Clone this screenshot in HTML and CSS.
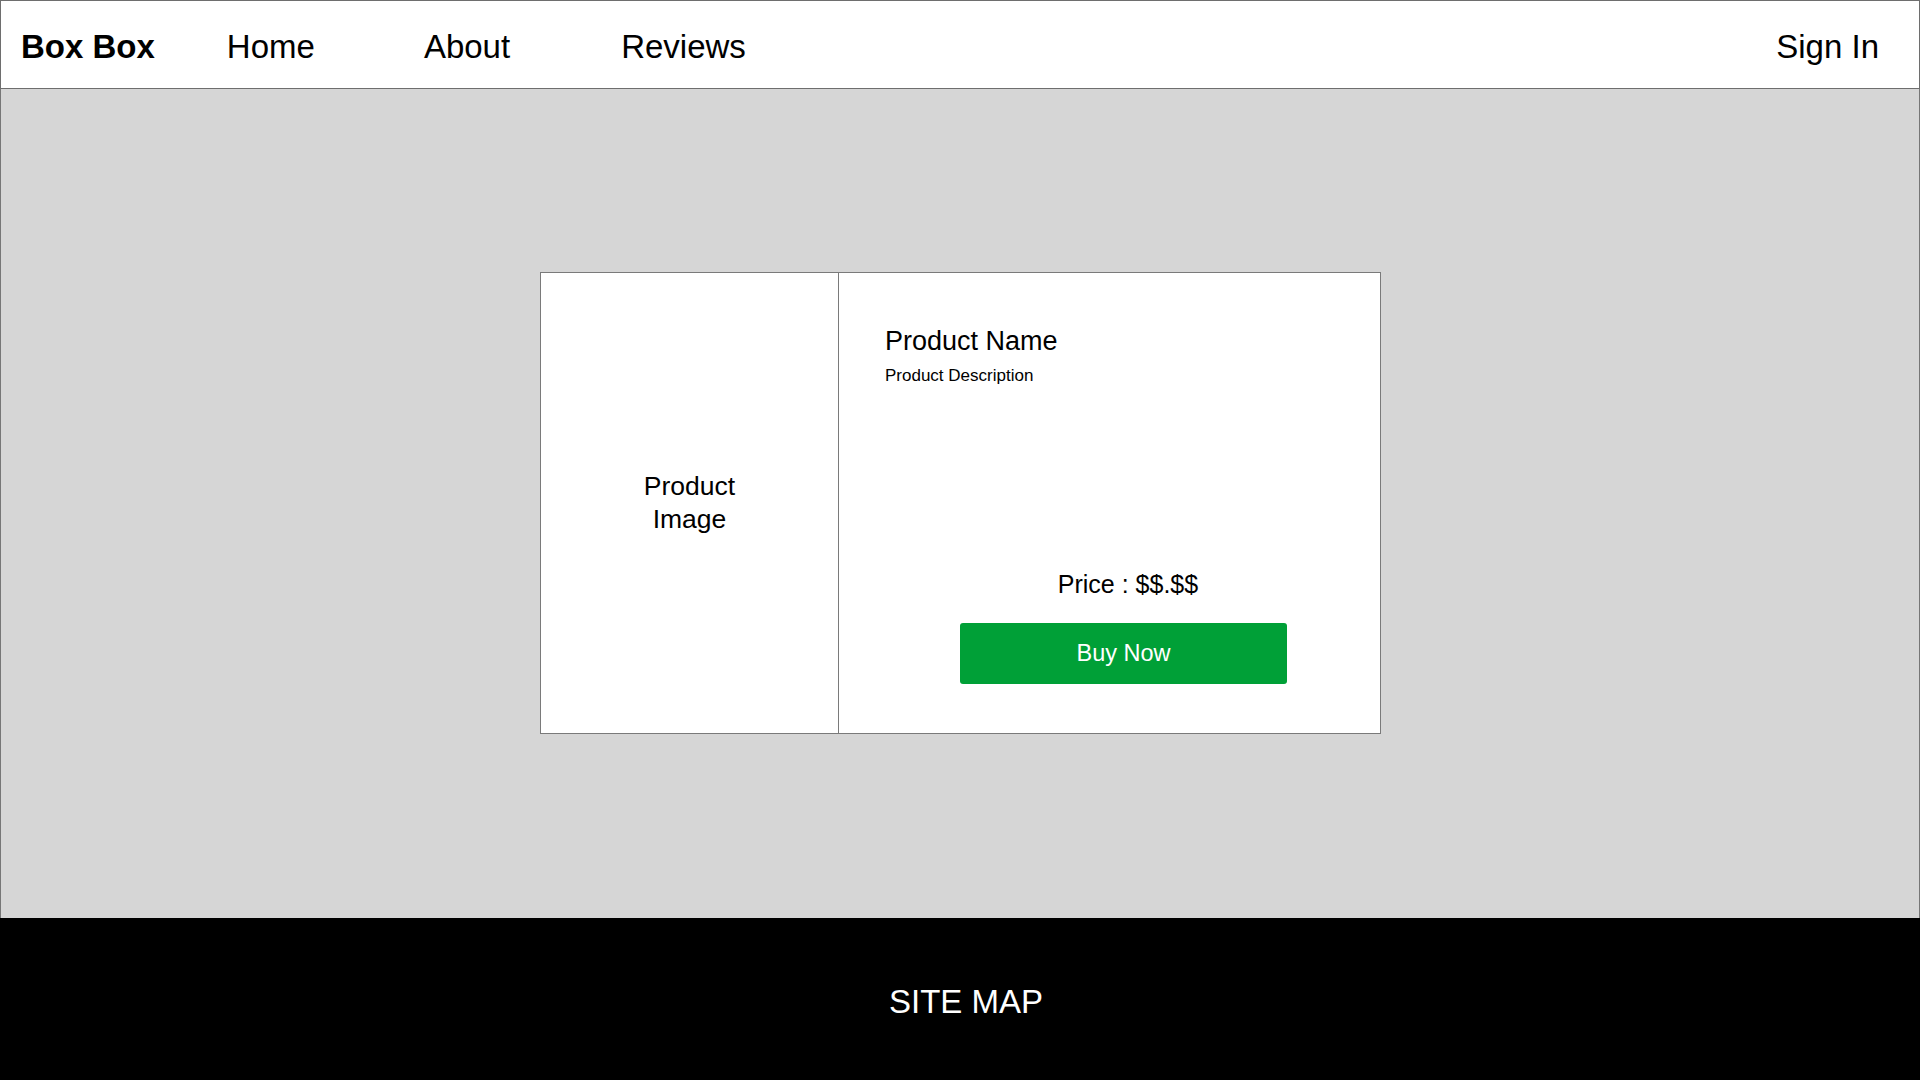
FILE: index.html
```html
<!DOCTYPE html>
<html lang="en">
<head>
<meta charset="utf-8">
<title>Box Box</title>
<link rel="stylesheet" href="styles.css">
</head>
<body>
<header class="topbar">
  <div class="logo">Box Box</div>
  <a class="nav nav-home" href="#">Home</a>
  <a class="nav nav-about" href="#">About</a>
  <a class="nav nav-reviews" href="#">Reviews</a>
  <a class="nav nav-signin" href="#">Sign In</a>
</header>
<main class="content">
  <section class="card">
    <div class="card-image">Product<br>Image</div>
    <div class="card-info">
      <h1 class="product-name">Product Name</h1>
      <p class="product-desc">Product Description</p>
      <div class="price">Price : $$.$$</div>
      <button class="buy-btn" type="button">Buy Now</button>
    </div>
  </section>
</main>
<footer class="footer">SITE MAP</footer>
</body>
</html>
```

FILE: styles.css
```css
* { box-sizing: border-box; }

html, body {
  margin: 0;
  padding: 0;
  width: 1920px;
  height: 1080px;
  overflow: hidden;
}

body {
  display: flex;
  flex-direction: column;
  font-family: "Liberation Sans", Arial, Helvetica, sans-serif;
  color: #000;
  background: #fff;
}

.topbar {
  height: 89px;
  flex: 0 0 89px;
  border: 1px solid #6e6e6e;
  background: #fff;
  display: flex;
  align-items: center;
  padding: 4px 40px 0 20px;
  font-size: 33px;
}

.logo {
  font-weight: bold;
}

.nav {
  color: #000;
  text-decoration: none;
}

.nav-home { margin-left: 72px; }
.nav-about { margin-left: 109px; }
.nav-reviews { margin-left: 111px; }
.nav-signin { margin-left: auto; }

.content {
  flex: 1 1 auto;
  background: #d6d6d6;
  border-left: 1px solid #777;
  border-right: 1px solid #777;
  display: flex;
  align-items: center;
  justify-content: center;
  padding-bottom: 1px;
}

.card {
  width: 841px;
  height: 462px;
  margin-left: 1px;
  border: 1px solid #7a7a7a;
  background: #fff;
  display: flex;
}

.card-image {
  width: 298px;
  flex: 0 0 298px;
  border-right: 1px solid #7a7a7a;
  display: flex;
  align-items: center;
  justify-content: center;
  text-align: center;
  font-size: 26.5px;
  line-height: 33px;
}

.card-info {
  flex: 1 1 auto;
  display: flex;
  flex-direction: column;
  padding: 53px 0 49px 46px;
}

.product-name {
  margin: 0;
  font-size: 27px;
  font-weight: normal;
  line-height: normal;
}

.product-desc {
  margin: 9px 0 0;
  font-size: 17px;
  line-height: normal;
}

.price {
  margin: auto 0 24px 75px;
  width: 327px;
  padding-left: 9px;
  text-align: center;
  font-size: 25px;
  line-height: normal;
}

.buy-btn {
  margin-left: 75px;
  width: 327px;
  height: 61px;
  border: 0;
  border-radius: 3px;
  background: #00a037;
  color: #fff;
  font-family: inherit;
  font-size: 23.5px;
  padding: 0;
  cursor: pointer;
}

.footer {
  flex: 0 0 162px;
  height: 162px;
  background: #000;
  color: #fff;
  display: flex;
  align-items: center;
  justify-content: center;
  padding: 5px 0 0 12px;
  font-size: 33px;
}
```
